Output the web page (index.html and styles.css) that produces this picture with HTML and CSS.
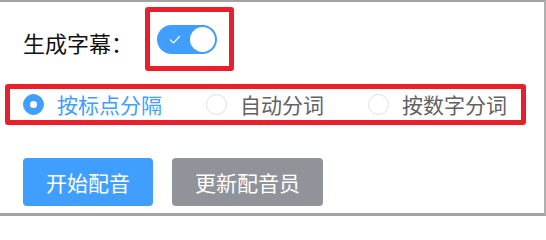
FILE: index.html
```html
<!DOCTYPE html>
<html lang="zh">
<head>
<meta charset="utf-8">
<link rel="stylesheet" href="styles.css">
</head>
<body>
<div class="frame">
  <div class="row-switch">
    <span class="label">生成字幕：</span>
    <div class="mark mark-switch">
      <div class="switch">
        <svg class="check" width="12" height="9" viewBox="0 0 12 9"><path d="M1 4.5 L4.5 8 L11 1" fill="none" stroke="#fff" stroke-width="1.2"/></svg>
        <span class="knob"></span>
      </div>
    </div>
  </div>
  <div class="mark mark-radio">
    <label class="radio checked"><span class="dot"></span><span class="rtext">按标点分隔</span></label>
    <label class="radio"><span class="dot"></span><span class="rtext">自动分词</span></label>
    <label class="radio"><span class="dot"></span><span class="rtext">按数字分词</span></label>
  </div>
  <div class="buttons">
    <button class="btn btn-primary">开始配音</button>
    <button class="btn btn-info">更新配音员</button>
  </div>
</div>
</body>
</html>
```
FILE: styles.css
```css
html, body {
  margin: 0;
  padding: 0;
  background: #fff;
}
body {
  font-family: "Noto Sans CJK SC", "Noto Sans", sans-serif;
}
.frame {
  box-sizing: border-box;
  width: 546px;
  height: 216px;
  border-top: 2px solid #a3a3a3;
  border-right: 2px solid #b0b0b0;
  border-bottom: 3px solid #a3a3a3;
  padding: 5px 0 0 5px;
}
.row-switch {
  display: flex;
  align-items: center;
  height: 64px;
}
.label {
  font-size: 22px;
  color: #111;
  margin-left: 18px;
  width: 122px;
  line-height: 22px;
  padding-top: 5px;
  white-space: nowrap;
}
.mark {
  box-sizing: border-box;
  border: 5px solid #e8202b;
  border-radius: 3px;
}
.mark-switch {
  width: 89px;
  height: 64px;
  display: flex;
  align-items: center;
  padding-left: 7px;
}
.switch {
  position: relative;
  width: 60px;
  height: 29px;
  border-radius: 15px;
  background: #409eff;
  display: flex;
  align-items: center;
  justify-content: space-between;
  padding: 0 2px 0 12px;
  box-sizing: border-box;
}
.check {
  margin-top: 1px;
}
.knob {
  width: 25px;
  height: 25px;
  border-radius: 50%;
  background: #fff;
}
.mark-radio {
  margin-top: 13px;
  width: 521px;
  height: 41px;
  display: flex;
  align-items: center;
  padding-left: 13px;
  gap: 44px;
}
.radio {
  display: flex;
  align-items: center;
  gap: 13px;
  font-size: 21px;
  line-height: 21px;
  color: #606266;
}
.dot {
  box-sizing: border-box;
  width: 21px;
  height: 21px;
  border-radius: 50%;
  border: 1px solid #dcdfe6;
  background: #fff;
  display: flex;
  align-items: center;
  justify-content: center;
}
.radio.checked {
  color: #409eff;
}
.radio.checked .dot {
  background: #409eff;
  border-color: #409eff;
}
.radio.checked .dot::after {
  content: "";
  width: 7px;
  height: 7px;
  border-radius: 50%;
  background: #fff;
}
.buttons {
  display: flex;
  gap: 19px;
  margin: 33px 0 0 18px;
}
.btn {
  font-family: inherit;
  font-size: 21px;
  height: 48px;
  padding: 0 23px;
  border: none;
  border-radius: 4px;
  color: #fff;
  line-height: 48px;
}
.btn-primary {
  background: #409eff;
}
.btn-info {
  background: #909399;
}
```
